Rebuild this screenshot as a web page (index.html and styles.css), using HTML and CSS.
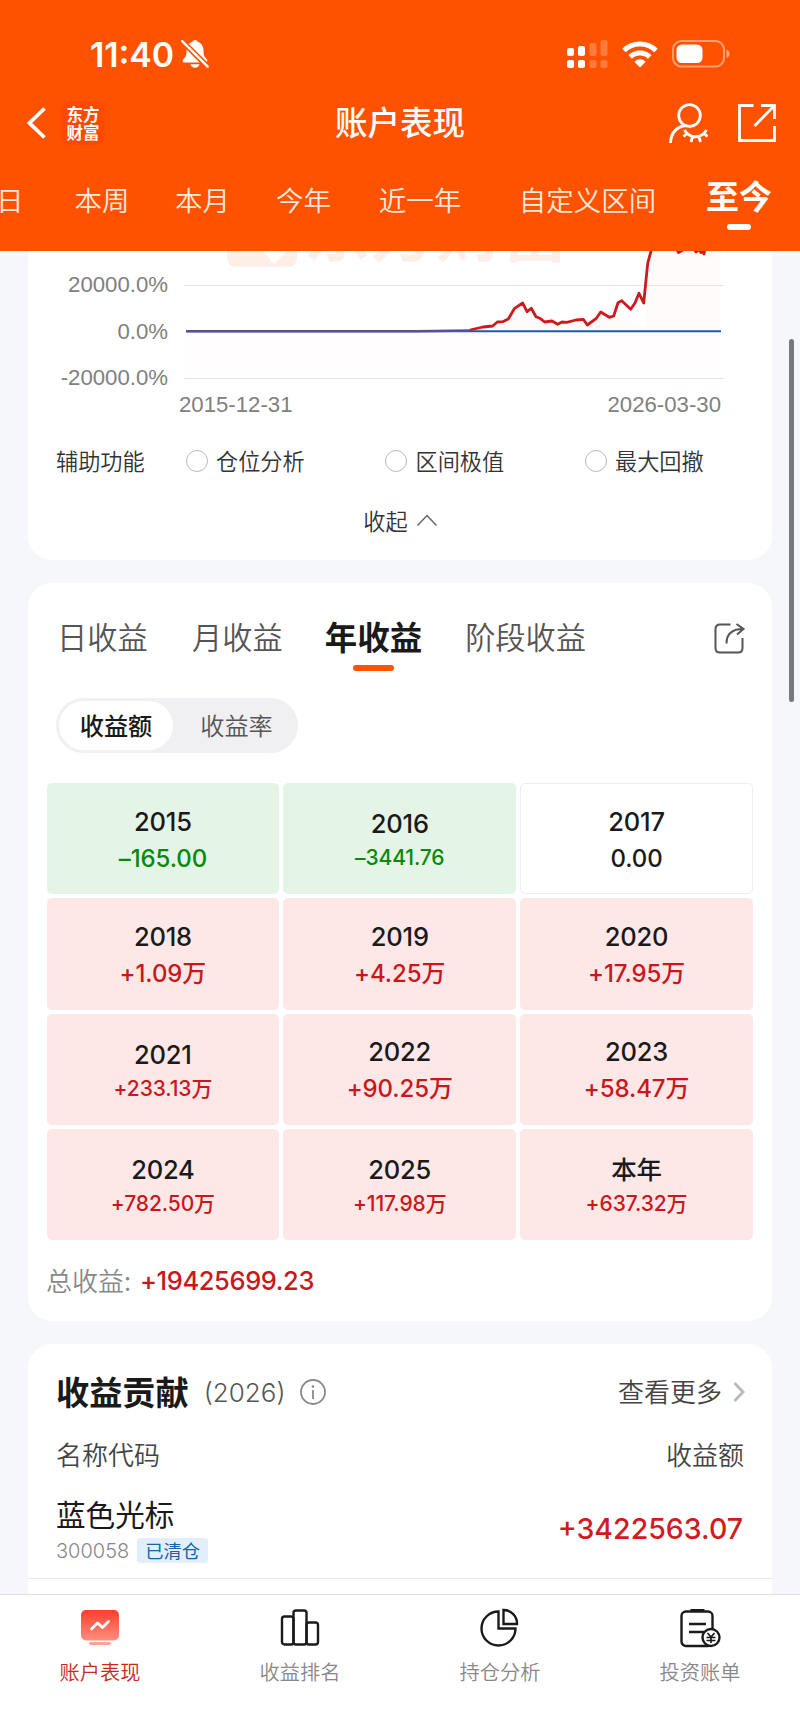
FILE: index.html
```html
<!DOCTYPE html>
<html lang="zh-CN">
<head>
    <meta charset="UTF-8">
    <meta name="viewport" content="width=device-width, initial-scale=1.0">
    <title>账户表现</title>
    <link rel="stylesheet" href="styles.css">
</head>
<body>
<div class="app">
    <header class="header">
        <div class="status">
            <span class="time">11:40</span>
            <svg class="bell" width="28" height="30" viewBox="0 0 28 30">
                <path d="M14 1c-1.500 0-2.300.8-2.500 1.700C7.500 4 5.500 7 5.500 11.500c0 5-1 6.500-3 8.500-1.300 1.300-1 3.500 1 3.500h21c2 0 2.300-2.200 1-3.500-2-2-3-3.500-3-8.500 0-4.500-2-7.500-6-8.800C16.300 1.800 15.500 1 14 1z" fill="#fff"/>
                <path d="M9.500 25.200h9c-.6 2.200-2.300 3.500-4.500 3.500s-3.900-1.300-4.500-3.500z" fill="#fff"/>
                <path d="M0 1l28 28" stroke="#ff5200" stroke-width="5.500"/>
                <path d="M1.200 2.200l25.500 25.500" stroke="#fff" stroke-width="2.400" stroke-linecap="round"/>
            </svg>
            <div class="status-right">
                <svg width="41" height="28" viewBox="0 0 41 28" fill="#fff">
                    <rect x="0" y="8" width="7" height="8" rx="2"/>
                    <rect x="11" y="6" width="7" height="10" rx="2"/>
                    <rect x="0" y="20" width="7" height="8" rx="2"/>
                    <rect x="11" y="20" width="7" height="8" rx="2"/>
                    <g opacity=".24">
                        <rect x="22.500" y="3" width="7" height="13" rx="2"/>
                        <rect x="33.500" y="0" width="7" height="16" rx="2"/>
                        <rect x="22.500" y="20" width="7" height="8" rx="2"/>
                        <rect x="33.500" y="20" width="7" height="8" rx="2"/>
                    </g>
                </svg>
                <svg class="wifi" width="36" height="27" viewBox="0 0 36 27" fill="none" stroke="#fff" stroke-width="5">
                    <path d="M2 9.500a23 23 0 0 1 32 0"/>
                    <path d="M8.300 16a14 14 0 0 1 19.400 0"/>
                    <path d="M18 26.500l-5.700-5.800a8 8 0 0 1 11.400 0z" fill="#fff" stroke="none"/>
                </svg>
                <svg class="battery" width="59" height="28" viewBox="0 0 59 28">
                    <rect x="1" y="1" width="51" height="25.500" rx="8.500" fill="none" stroke="#fff" stroke-opacity=".45" stroke-width="2"/>
                    <rect x="4.500" y="4.500" width="26" height="18.500" rx="5.500" fill="#fff"/>
                    <path d="M54.500 9.500c4 1.500 4 7 0 8.500z" fill="#fff" opacity=".5"/>
                </svg>
            </div>
        </div>
        <div class="navbar">
            <svg class="back" width="19" height="32" viewBox="0 0 19 32" fill="none" stroke="#fff" stroke-width="3.800">
                <path d="M17.500 1.500L2.500 16l15 14.500"/>
            </svg>
            <div class="logo">东方<br>财富</div>
            <h1>账户表现</h1>
            <div class="nav-icons">
                <svg width="40" height="42" viewBox="0 0 40 42" fill="none" stroke="#fff" stroke-width="2.800">
                    <circle cx="20.500" cy="13.500" r="10.800"/>
                    <path d="M1.500 41c.5-10 6-16 15-17.500"/>
                    <path d="M15.500 28c5 9 17 9 22 0M18 31.500l-3.500 3M23.500 35l-1.500 5M30 35l1.500 5M35 31.500l3.500 3"/>
                </svg>
                <svg width="38" height="38" viewBox="0 0 38 38" fill="none" stroke="#fff" stroke-width="2.800">
                    <path d="M15.500 1.500h-14v35h35V22M23 1.500h13.500V15M36 2L16.500 22"/>
                </svg>
            </div>
        </div>
        <nav class="periods">
            <span class="cut">日</span>
            <span>本周</span>
            <span>本月</span>
            <span>今年</span>
            <span>近一年</span>
            <span>自定义区间</span>
            <span class="active">至今</span>
        </nav>
    </header>

    <main class="content">
        <section class="card chart-card">
            <svg class="chart" width="744" height="170" viewBox="28 251 744 170">
                <g fill="#fdeee8">
                    <path d="M227 251h70v6q0 10-10 10h-50q-10 0-10-10z"/>
                    <path d="M263 251h24l-13 13z" fill="#fff"/>
                    <text class="watermark" x="304" y="256">东方财富</text>
                </g>
                <path d="M470 331L500 324 523 305 560 322 625 316 644 331 650 251H721V331z" fill="#fffbfb"/>
                <path d="M186 331H721V376H186z" fill="#fffdfd"/>
                <path d="M184 285.500h540M184 378.500h540" stroke="#e6e6e6"/>
                <path d="M186 331.200h535" stroke="#1f5bab" stroke-width="2"/>
                <path d="M186 331.200h230l54-.7" stroke="#57509a" stroke-width="2.600" fill="none"/>
                <polyline points="470,330 483,327 492.700,326 497.300,322 502.700,321.700 508.300,319 514.300,308.700 522.700,303 527,311.700 531.300,308.300 536,316.700 540,318.300 544.700,322 552,321 557.700,324.300 562,322 566.700,322.300 576,320 583.300,319.300 587.300,325 596,318.700 600.700,312 609.300,317.300 613.700,316 618,302.700 621.700,300.700 630.700,309.300 635,303 639,293.300 643.700,303 647.700,263.300 651.300,250"/>
                <polyline points="676,248 678.500,252.500 683,250 687,247 692,247 696,252 699,249.500 701,252.500 702.500,250 704,254 705,248"/>
                <g class="axis">
                    <text x="168" y="292" text-anchor="end">20000.0%</text>
                    <text x="168" y="338.700" text-anchor="end">0.0%</text>
                    <text x="168" y="385.300" text-anchor="end">-20000.0%</text>
                    <text x="179" y="412">2015-12-31</text>
                    <text x="721" y="412" text-anchor="end">2026-03-30</text>
                </g>
            </svg>
            <div class="tools">
                <span class="tools-label">辅助功能</span>
                <label><i></i>仓位分析</label>
                <label><i></i>区间极值</label>
                <label><i></i>最大回撤</label>
            </div>
            <div class="collapse">收起
                <svg width="20" height="12" viewBox="0 0 20 12" fill="none" stroke="#666" stroke-width="1.500">
                    <path d="M.5 11.500L10 1.500l9.500 10"/>
                </svg>
            </div>
        </section>

        <section class="card profit-card">
            <div class="tabs">
                <span>日收益</span>
                <span>月收益</span>
                <span class="active">年收益</span>
                <span>阶段收益</span>
                <svg width="31" height="31" viewBox="0 0 31 31" fill="none" stroke="#555" stroke-width="2">
                    <path d="M16.500 1.500H6Q1.500 1.500 1.500 6v19q0 4.500 4.500 4.500h18q4.500 0 4.500-4.500V15"/>
                    <path d="M12.500 20.500C12.500 11 18 6 29 6M22.500 1l7 5-6.500 5.500"/>
                </svg>
            </div>
            <div class="switch">
                <span class="on">收益额</span>
                <span>收益率</span>
            </div>
            <div class="years">
                <div class="year down"><b>2015</b><span>–165.00</span></div>
                <div class="year down small"><b>2016</b><span>–3441.76</span></div>
                <div class="year flat"><b>2017</b><span>0.00</span></div>
                <div class="year"><b>2018</b><span>+1.09万</span></div>
                <div class="year"><b>2019</b><span>+4.25万</span></div>
                <div class="year"><b>2020</b><span>+17.95万</span></div>
                <div class="year small"><b>2021</b><span>+233.13万</span></div>
                <div class="year"><b>2022</b><span>+90.25万</span></div>
                <div class="year"><b>2023</b><span>+58.47万</span></div>
                <div class="year small"><b>2024</b><span>+782.50万</span></div>
                <div class="year small"><b>2025</b><span>+117.98万</span></div>
                <div class="year small"><b>本年</b><span>+637.32万</span></div>
            </div>
            <div class="total">总收益: <span>+19425699.23</span></div>
        </section>

        <section class="card contrib-card">
            <div class="contrib-head">
                <h2>收益贡献</h2>
                <span class="contrib-year">(2026)</span>
                <svg width="26" height="26" viewBox="0 0 26 26" fill="none" stroke="#888" stroke-width="1.800">
                    <circle cx="13" cy="13" r="12"/>
                    <path d="M13 11v9"/>
                    <circle cx="13" cy="7.500" r="1.300" fill="#888" stroke="none"/>
                </svg>
                <span class="more">查看更多</span>
                <svg class="arrow" width="12" height="20" viewBox="0 0 12 20" fill="none" stroke="#bbb" stroke-width="3">
                    <path d="M1.500 1l8.500 9-8.500 9"/>
                </svg>
            </div>
            <div class="contrib-cols"><span>名称代码</span><span>收益额</span></div>
            <div class="stock">
                <div>
                    <div class="stock-name">蓝色光标</div>
                    <div class="stock-code">300058 <em>已清仓</em></div>
                </div>
                <div class="amount">+3422563.07</div>
            </div>
        </section>
        <div class="scrollbar"></div>
    </main>

    <footer class="tabbar">
        <div class="tab active">
            <svg width="40" height="40" viewBox="0 0 40 40">
                <defs>
                    <linearGradient id="screen" x1="0" y1="0" x2="0" y2="1">
                        <stop offset="0" stop-color="#ff3d2b"/>
                        <stop offset="1" stop-color="#ff8f80"/>
                    </linearGradient>
                </defs>
                <rect x="1" y="2" width="38" height="30.500" rx="5" fill="url(#screen)"/>
                <rect x="9" y="34" width="22" height="3" rx="1.500" fill="#f9a298"/>
                <path d="M11.500 21l6-6 5 4.500 6-6" fill="none" stroke="#fff" stroke-width="2.800" stroke-linecap="round" stroke-linejoin="round"/>
            </svg>
            <span>账户表现</span>
        </div>
        <div class="tab">
            <svg width="40" height="40" viewBox="0 0 40 40" fill="none" stroke="#1a1a1a" stroke-width="2.400">
                <rect x="2" y="8.500" width="11.500" height="28" rx="2.500"/>
                <rect x="13.500" y="2.500" width="13" height="34" rx="2.500"/>
                <rect x="26.500" y="14.500" width="11.500" height="22" rx="2.500"/>
            </svg>
            <span>收益排名</span>
        </div>
        <div class="tab">
            <svg width="40" height="40" viewBox="0 0 40 40" fill="none" stroke="#1a1a1a" stroke-width="2.400">
                <path d="M18.500 3.500A17 17 0 1 0 35.500 20.500H18.500z"/>
                <path d="M23.500 2a13.500 13.500 0 0 1 13.500 14H23.500z"/>
            </svg>
            <span>持仓分析</span>
        </div>
        <div class="tab">
            <svg width="42" height="40" viewBox="0 0 42 40" fill="none" stroke="#1a1a1a" stroke-width="2.400">
                <rect x="2.500" y="3.500" width="31" height="34.500" rx="4.500"/>
                <path d="M11.500 2.500h14" stroke-width="3"/>
                <path d="M10 16h17M10 24h15"/>
                <circle cx="32" cy="29.500" r="8.500" fill="#fff"/>
                <path d="M28.500 25l3.500 4 3.500-4M32 29v6M27.500 29.500h9M27.500 32.500h9" stroke-width="1.700"/>
            </svg>
            <span>投资账单</span>
        </div>
    </footer>
</div>
</body>
</html>
```
FILE: styles.css
```css
* {
    box-sizing: border-box;
    margin: 0;
    padding: 0;
}
body {
    font-family: "Noto Sans CJK SC", sans-serif;
    font-weight: 350;
    color: #1a1a1a;
    background: #f6f7fa;
}
svg {
    display: block;
    flex-shrink: 0;
}
.app {
    width: 800px;
    height: 1734px;
    display: flex;
    flex-direction: column;
    overflow: hidden;
}

/* header */
.header {
    height: 251px;
    flex-shrink: 0;
    background: #ff5200;
    color: #fff;
    overflow: hidden;
}
.status {
    display: flex;
    align-items: center;
    height: 54px;
    margin-top: 27px;
    padding: 0 69px 0 90px;
}
.time {
    font: 600 33.800px/56px Inter, sans-serif;
    width: 91px;
    padding-top: 1px;
}
.status-right {
    display: flex;
    align-items: center;
    margin-left: auto;
}
.wifi {
    margin-left: 14px;
}
.battery {
    margin-left: 14px;
}
.navbar {
    display: flex;
    align-items: center;
    height: 84px;
    padding: 0 24px 0 27px;
    position: relative;
}
.logo {
    width: 44px;
    height: 44px;
    margin-left: 15px;
    padding-top: 4px;
    border-radius: 9px;
    background: #ff4900;
    font-size: 16.500px;
    font-weight: 700;
    line-height: 18px;
    text-align: center;
}
.navbar h1 {
    position: absolute;
    left: 0;
    right: 0;
    top: 16px;
    text-align: center;
    font-size: 32.500px;
    font-weight: 500;
    line-height: 48px;
}
.nav-icons {
    display: flex;
    align-items: center;
    gap: 29px;
    margin-left: auto;
}
.periods {
    display: grid;
    grid-template-columns: 52px 100px 101px 101px 132px 203px 100px;
    padding-top: 14px;
    font-size: 27.500px;
    line-height: 40px;
    text-align: center;
    color: #ffeadb;
}
.periods .cut {
    text-align: left;
    margin-left: -4px;
}
.periods .active {
    position: relative;
    top: -4px;
    font-size: 33px;
    font-weight: 700;
    color: #fff;
}
.periods .active::after {
    content: "";
    position: absolute;
    left: 38px;
    top: 49px;
    width: 24px;
    height: 6px;
    border-radius: 3px;
    background: #fff;
}

/* cards */
.content {
    flex: 1;
    min-height: 0;
    overflow: hidden;
    padding: 0 28px;
    position: relative;
}
.card {
    background: #fff;
    border-radius: 24px;
}
.chart-card {
    height: 309px;
    border-radius: 0 0 24px 24px;
}
.chart polyline {
    fill: none;
    stroke: #cc1a1e;
    stroke-width: 2.800;
    stroke-linejoin: round;
}
.axis {
    font: 22.200px "Liberation Sans", Arial, sans-serif;
    fill: #808080;
}
.watermark {
    font-size: 66px;
    font-weight: 700;
}
.tools {
    display: flex;
    align-items: center;
    height: 78px;
    padding-left: 28px;
    font-size: 22.200px;
    color: #333;
}
.tools-label {
    flex: none;
    width: 129.500px;
}
.tools label {
    display: flex;
    align-items: center;
    flex: none;
    width: 199.500px;
}
.tools i {
    width: 22px;
    height: 22px;
    margin: 2px 8.500px 0 0;
    border: 1.500px solid #bbb;
    border-radius: 50%;
}
.collapse {
    display: flex;
    justify-content: center;
    align-items: center;
    gap: 9px;
    height: 42px;
    font-size: 22.200px;
    color: #333;
}
.profit-card {
    height: 738px;
    margin-top: 23px;
    padding: 28px 18px 0;
}
.tabs {
    display: flex;
    align-items: center;
    height: 50px;
    padding: 0 9px 0 11px;
    font-size: 30.200px;
    color: #555;
}
.tabs span {
    margin-right: 43.500px;
    line-height: 50px;
}
.tabs span:first-child {
    margin-right: 44.500px;
}
.tabs span.active {
    position: relative;
    margin: 0 43px 0 -1.500px;
    font-size: 32.500px;
    font-weight: 700;
    color: #1a1a1a;
}
.tabs .active::after {
    content: "";
    position: absolute;
    left: 28px;
    top: 54px;
    width: 41px;
    height: 6px;
    border-radius: 3px;
    background: #ff5200;
}
.tabs svg {
    margin: 4px 0 0 auto;
}
.switch {
    display: flex;
    width: 242px;
    height: 55px;
    margin: 37px 0 30px 10px;
    padding: 3px;
    border-radius: 28px;
    background: #f0f0f3;
    font-size: 24.200px;
    line-height: 47px;
    text-align: center;
    color: #555;
}
.switch span {
    flex: 1;
    padding-left: 5px;
    border-radius: 25px;
}
.switch .on {
    flex: 0 0 114px;
    padding-left: 0;
    background: #fff;
    color: #1a1a1a;
    font-weight: 500;
}
.years {
    display: grid;
    grid-template-columns: repeat(3, 1fr);
    grid-auto-rows: 111.300px;
    gap: 4px;
    padding: 0 1px 0 .5px;
}
.year {
    display: flex;
    flex-direction: column;
    align-items: center;
    justify-content: center;
    padding-top: 2px;
    border-radius: 5px;
    background: #fde7e7;
    font-family: Inter, "Noto Sans CJK SC", sans-serif;
    font-weight: 500;
    color: #c9171c;
}
.year b {
    height: 36px;
    font-size: 25.500px;
    font-weight: 500;
    line-height: 36px;
    letter-spacing: -.2px;
    color: #1a1a1a;
}
.year span {
    height: 36px;
    font-size: 24px;
    line-height: 38px;
    letter-spacing: -.1px;
}
.year.small span {
    height: 31px;
    font-size: 21px;
    line-height: 32px;
}
.year.down {
    background: #e4f4e7;
    color: #078a07;
}
.year.flat {
    background: #fff;
    border: 1px solid #eee;
    color: #1a1a1a;
}
.total {
    display: flex;
    gap: 9px;
    margin-top: 20px;
    font-size: 26px;
    line-height: 40px;
    color: #888;
}
.total span {
    padding-top: 1px;
    font-family: Inter, sans-serif;
    font-size: 25.500px;
    font-weight: 500;
    letter-spacing: -.4px;
    color: #c9171c;
}
.contrib-card {
    height: 300px;
    margin-top: 23px;
    padding-top: 24px;
}
.contrib-head {
    display: flex;
    align-items: center;
    height: 48px;
    padding: 0 27px 0 28px;
}
.contrib-head h2 {
    font-size: 33.200px;
    font-weight: 700;
    line-height: 46px;
    margin-top: -2px;
}
.contrib-year {
    margin: 0 15px 0 15px;
    font-family: Inter, sans-serif;
    font-size: 26px;
    color: #555;
}
.more {
    margin: -3px 0 0 auto;
    font-size: 26px;
    color: #444;
}
.arrow {
    margin-left: 11px;
}
.contrib-cols {
    display: flex;
    justify-content: space-between;
    padding: 0 28px;
    margin-top: 18px;
    font-size: 26px;
    line-height: 40px;
    color: #444;
}
.stock {
    display: flex;
    justify-content: space-between;
    align-items: center;
    height: 105px;
    border-bottom: 1px solid #e8e8ea;
    padding: 5px 29px 0 28px;
}
.stock-name {
    font-size: 29.600px;
    font-weight: 400;
    line-height: 40px;
}
.stock-code {
    display: flex;
    align-items: center;
    gap: 8px;
    margin-top: 4px;
    font: 300 20px/26px Inter, sans-serif;
    color: #888;
}
.stock-code em {
    padding: 0 8px;
    border-radius: 3px;
    background: #e2effb;
    font: 400 18.300px/25px "Noto Sans CJK SC", sans-serif;
    color: #1762a5;
}
.amount {
    padding-top: 1px;
    font: 500 28.500px/40px Inter, sans-serif;
    color: #d01c20;
}
.scrollbar {
    position: absolute;
    left: 789px;
    top: 88px;
    width: 5px;
    height: 363px;
    border-radius: 3px;
    background: #77797c;
}

/* bottom tab bar */
.tabbar {
    display: grid;
    grid-template-columns: repeat(4, 1fr);
    height: 140px;
    flex-shrink: 0;
    border-top: 1px solid #dedfe3;
    background: #fff;
}
.tab {
    display: flex;
    flex-direction: column;
    align-items: center;
    padding-top: 13px;
    font-size: 20.200px;
    line-height: 30px;
    color: #888;
}
.tab span {
    margin-top: 9px;
}
.tab.active {
    color: #c62a1a;
}
```
